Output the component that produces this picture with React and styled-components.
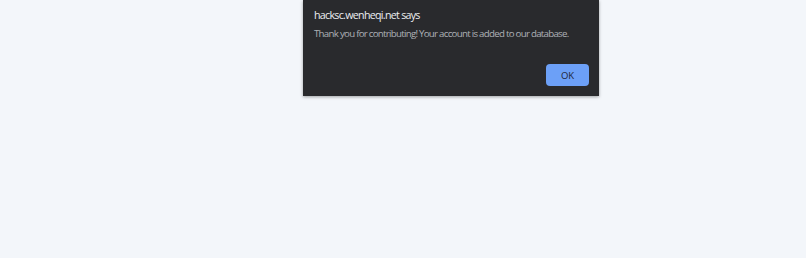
import React from 'react'
import styled, { createGlobalStyle } from 'styled-components'

const Global = createGlobalStyle`
  html, body { margin: 0; padding: 0; }
  body {
    background: #f3f6fa;
    font-family: "Open Sans", "Noto Sans", "Liberation Sans", sans-serif;
  }
`

const Page = styled.div`
  width: 806px;
  height: 258px;
  background: #f3f6fa;
  padding-left: 303px;
  box-sizing: border-box;
`

const Dialog = styled.div`
  width: 296px;
  height: 96px;
  background: #292a2d;
  box-shadow: 0 1px 3px rgba(0, 0, 0, 0.35);
  box-sizing: border-box;
  padding: 7px 10px 0 11px;
  display: flex;
  flex-direction: column;
`

const Title = styled.div`
  color: #eceef1;
  font-size: 10.7px;
  letter-spacing: -0.72px;
  line-height: 16px;
`

const Message = styled.div`
  margin-top: 4px;
  color: #aeb1b6;
  font-size: 9.7px;
  letter-spacing: -0.72px;
  line-height: 14px;
  white-space: nowrap;
`

const Actions = styled.div`
  margin-top: 23px;
  display: flex;
  justify-content: flex-end;
`

const Button = styled.button`
  width: 43px;
  height: 22px;
  border: none;
  border-radius: 4px;
  background: #6ca0f7;
  color: #1d2436;
  font-family: inherit;
  font-size: 9.5px;
  font-weight: 500;
  padding: 0;
`

export default function App() {
  return (
    <Page>
      <Global />
      <Dialog>
        <Title>hacksc.wenheqi.net says</Title>
        <Message>Thank you for contributing! Your account is added to our database.</Message>
        <Actions>
          <Button>OK</Button>
        </Actions>
      </Dialog>
    </Page>
  )
}
